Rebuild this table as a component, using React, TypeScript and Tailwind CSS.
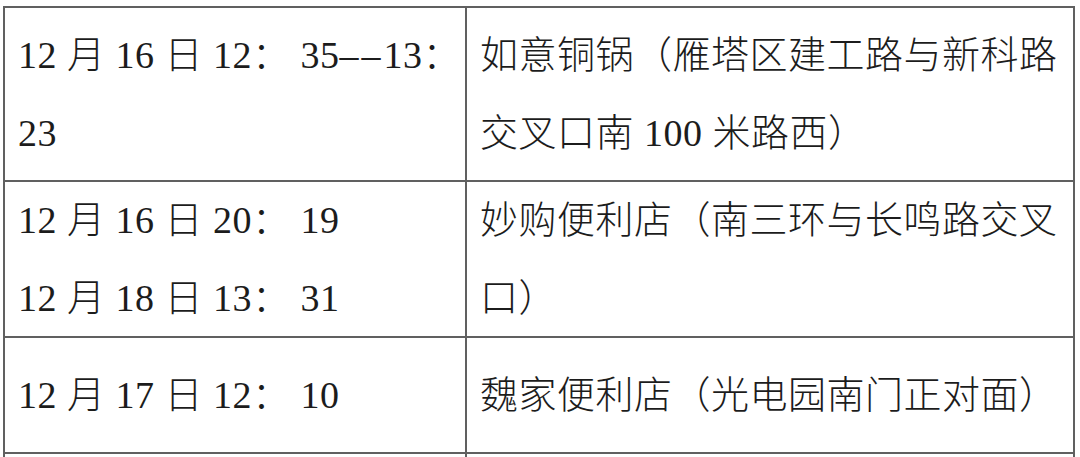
import React from "react";

const font = {
  fontFamily: '"Liberation Serif", "Noto Sans CJK SC", serif',
};

type Row = { h: string; left: React.ReactNode[]; right: string[] };

const rows: Row[] = [
  {
    h: "h-[174px]",
    left: [
      <>
        12 月 16 日 12： 35<span className="tracking-[3px]">––</span>13：
      </>,
      "23",
    ],
    right: ["如意铜锅（雁塔区建工路与新科路", "交叉口南 100 米路西）"],
  },
  {
    h: "h-[156px]",
    left: ["12 月 16 日 20： 19", "12 月 18 日 13： 31"],
    right: ["妙购便利店（南三环与长鸣路交叉", "口）"],
  },
  {
    h: "h-[116px]",
    left: ["12 月 17 日 12： 10"],
    right: ["魏家便利店（光电园南门正对面）"],
  },
  {
    h: "h-[80px]",
    left: [],
    right: [],
  },
];

function Cell({ lines, h }: { lines: React.ReactNode[]; h: string }) {
  return (
    <div
      className={`${h} flex flex-col justify-center border-r-2 border-b-2 border-[#606060] pl-[13px] text-[38px] font-light leading-[78px] tracking-[0.5px] text-[#1c1c1c] whitespace-pre overflow-hidden`}
    >
      {lines.map((l, i) => (
        <div key={i}>{l}</div>
      ))}
    </div>
  );
}

export default function App() {
  return (
    <div className="h-[457px] w-[1080px] overflow-hidden bg-white pt-[6px] pl-[3px]" style={font}>
      <div className="grid w-[1072px] grid-cols-[462px_608px] border-l-2 border-t-2 border-[#606060]">
        {rows.map((r, i) => (
          <React.Fragment key={i}>
            <Cell lines={r.left} h={r.h} />
            <Cell lines={r.right} h={r.h} />
          </React.Fragment>
        ))}
      </div>
    </div>
  );
}
